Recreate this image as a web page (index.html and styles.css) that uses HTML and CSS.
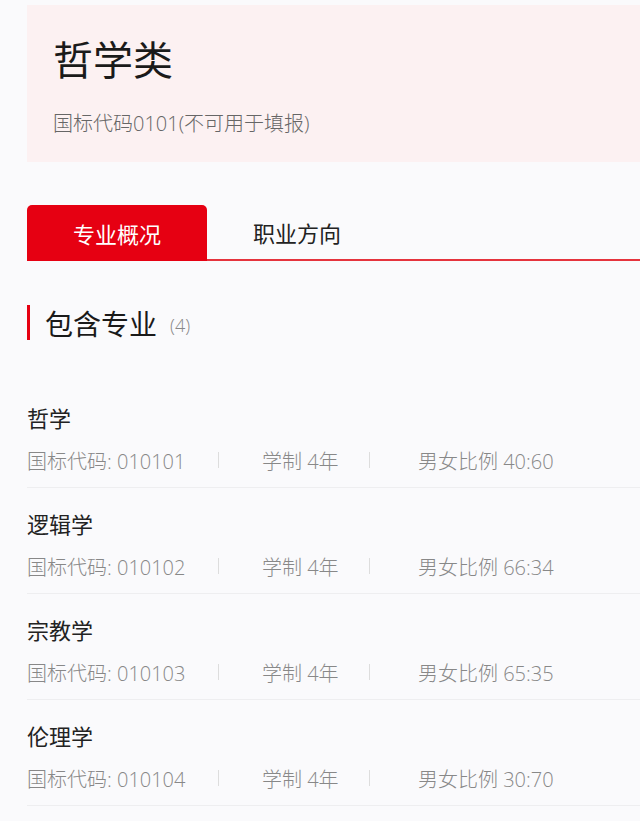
FILE: index.html
```html
<!DOCTYPE html>
<html lang="zh-CN">
<head>
<meta charset="utf-8">
<link rel="stylesheet" href="styles.css">
</head>
<body>
<div class="page">
  <header class="hero">
    <h1 class="hero-title">哲学类</h1>
    <p class="hero-sub">国标代码0101(不可用于填报)</p>
  </header>

  <nav class="tabs">
    <div class="tab active">专业概况</div>
    <div class="tab">职业方向</div>
  </nav>

  <h2 class="section-title"><span class="bar"></span><span class="label">包含专业</span><span class="count">(4)</span></h2>

  <ul class="list">
    <li class="item">
      <div class="name">哲学</div>
      <div class="meta"><span class="code">国标代码: 010101</span><span class="sep"></span><span class="term">学制 4年</span><span class="sep"></span><span class="ratio">男女比例 40:60</span></div>
    </li>
    <li class="item">
      <div class="name">逻辑学</div>
      <div class="meta"><span class="code">国标代码: 010102</span><span class="sep"></span><span class="term">学制 4年</span><span class="sep"></span><span class="ratio">男女比例 66:34</span></div>
    </li>
    <li class="item">
      <div class="name">宗教学</div>
      <div class="meta"><span class="code">国标代码: 010103</span><span class="sep"></span><span class="term">学制 4年</span><span class="sep"></span><span class="ratio">男女比例 65:35</span></div>
    </li>
    <li class="item">
      <div class="name">伦理学</div>
      <div class="meta"><span class="code">国标代码: 010104</span><span class="sep"></span><span class="term">学制 4年</span><span class="sep"></span><span class="ratio">男女比例 30:70</span></div>
    </li>
  </ul>
</div>
</body>
</html>
```

FILE: styles.css
```css
html, body {
  margin: 0;
  padding: 0;
  background: #fafafc;
}
body {
  font-family: "Open Sans", "Noto Sans CJK SC", sans-serif;
  color: #222;
}
.page {
  padding: 5px 0 0 27px;
}
.hero {
  background: #fcf1f2;
  height: 157px;
  padding-left: 26px;
  box-sizing: border-box;
  padding-top: 35px;
}
.hero-title {
  margin: 0;
  font-size: 40px;
  line-height: 40px;
  font-weight: 400;
  color: #1a1a1a;
}
.hero-sub {
  margin: 32px 0 0;
  font-size: 20px;
  line-height: 24px;
  font-weight: 300;
  color: #666;
}
.tabs {
  display: flex;
  margin-top: 43px;
  height: 56px;
  border-bottom: 2px solid #e5333d;
  box-sizing: border-box;
}
.tab {
  width: 180px;
  display: flex;
  align-items: center;
  justify-content: center;
  font-size: 22px;
  color: #222;
}
.tab.active {
  background: #e60012;
  color: #fff;
  border-radius: 5px 5px 0 0;
  height: 56px;
}
.section-title {
  display: flex;
  align-items: center;
  margin: 44px 0 0;
  height: 35px;
  font-weight: 400;
}
.bar {
  width: 3px;
  height: 35px;
  background: #e60012;
}
.label {
  margin-left: 15px;
  font-size: 28px;
  color: #1a1a1a;
}
.count {
  margin-left: 13px;
  font-size: 18px;
  font-weight: 300;
  color: #888;
  padding-top: 4px;
}
.list {
  list-style: none;
  margin: 42px 0 0;
  padding: 0;
}
.item {
  padding: 21px 0 12px;
  border-bottom: 1px solid #eeeef0;
}
.name {
  font-size: 22px;
  line-height: 30px;
  color: #222;
}
.meta {
  display: flex;
  align-items: center;
  margin-top: 12px;
  height: 30px;
  font-size: 20px;
  font-weight: 300;
  color: #888;
}
.code {
  width: 191px;
}
.sep {
  width: 1px;
  height: 16px;
  background: #ddd;
}
.term {
  width: 107px;
  padding-left: 43px;
}
.ratio {
  padding-left: 48px;
}
```
